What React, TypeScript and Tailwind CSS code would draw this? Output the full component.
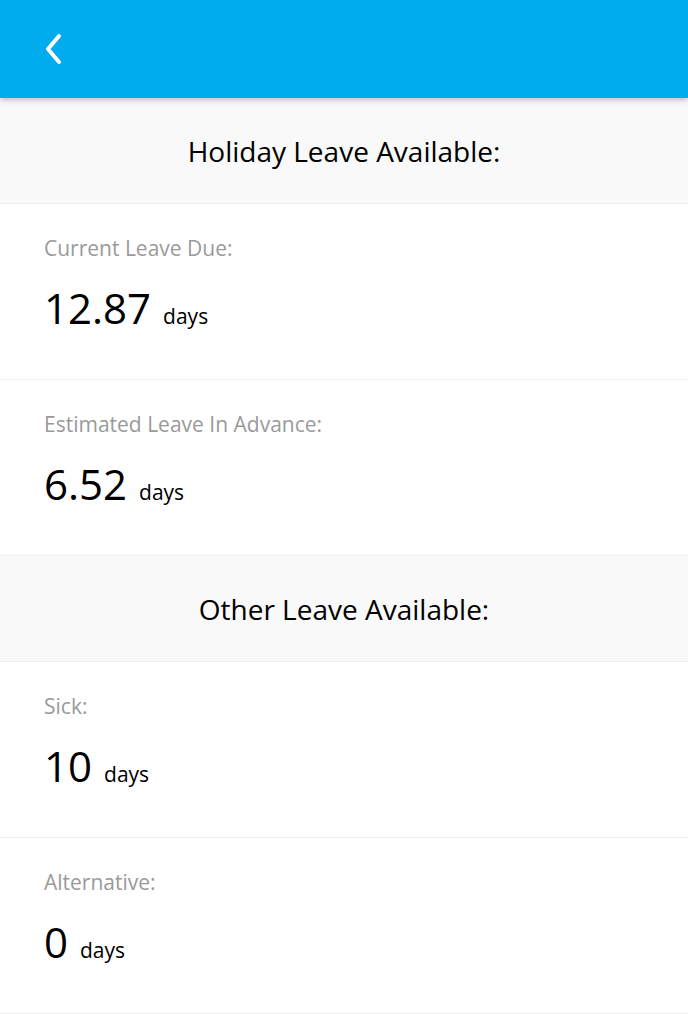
import React from "react";

interface LeaveItem {
  label: string;
  value: string;
}

const HOLIDAY: LeaveItem[] = [
  { label: "Current Leave Due:", value: "12.87" },
  { label: "Estimated Leave In Advance:", value: "6.52" },
];

const OTHER: LeaveItem[] = [
  { label: "Sick:", value: "10" },
  { label: "Alternative:", value: "0" },
];

function SectionHeader({ title }: { title: string }) {
  return (
    <div className="h-[106px] bg-[#f9f9f9] border-b border-[#eeeeee] flex items-center justify-center">
      <h2 className="text-[28px] leading-[36px] text-black">{title}</h2>
    </div>
  );
}

function Item({ item }: { item: LeaveItem }) {
  return (
    <div className="h-[176px] bg-white border-b border-[#eeeeee] px-11 pt-[30px]">
      <div className="text-[21px] text-[#9a9a9a] leading-[28px]">{item.label}</div>
      <div className="flex items-baseline mt-[18px]">
        <span className="text-[42px] leading-[56px] text-black">{item.value}</span>
        <span className="text-[21px] text-black ml-3">days</span>
      </div>
    </div>
  );
}

export default function App() {
  return (
    <div
      className="min-h-screen bg-white"
      style={{ fontFamily: '"Open Sans", "Noto Sans", sans-serif' }}
    >
      {/* Top bar */}
      <div className="relative z-10 h-[98px] bg-[#00acee] flex items-center px-[42px] shadow-[0_2px_6px_rgba(0,0,0,0.25)]">
        <button className="w-6 h-10 flex items-center justify-center">
          <svg width="22" height="32" viewBox="0 0 22 32" fill="none">
            <path
              d="M16 3 L5 16 L16 29"
              stroke="white"
              strokeWidth="4"
              strokeLinecap="round"
              strokeLinejoin="round"
            />
          </svg>
        </button>
      </div>

      <SectionHeader title="Holiday Leave Available:" />
      {HOLIDAY.map((it) => (
        <Item key={it.label} item={it} />
      ))}

      <SectionHeader title="Other Leave Available:" />
      {OTHER.map((it) => (
        <Item key={it.label} item={it} />
      ))}
    </div>
  );
}
